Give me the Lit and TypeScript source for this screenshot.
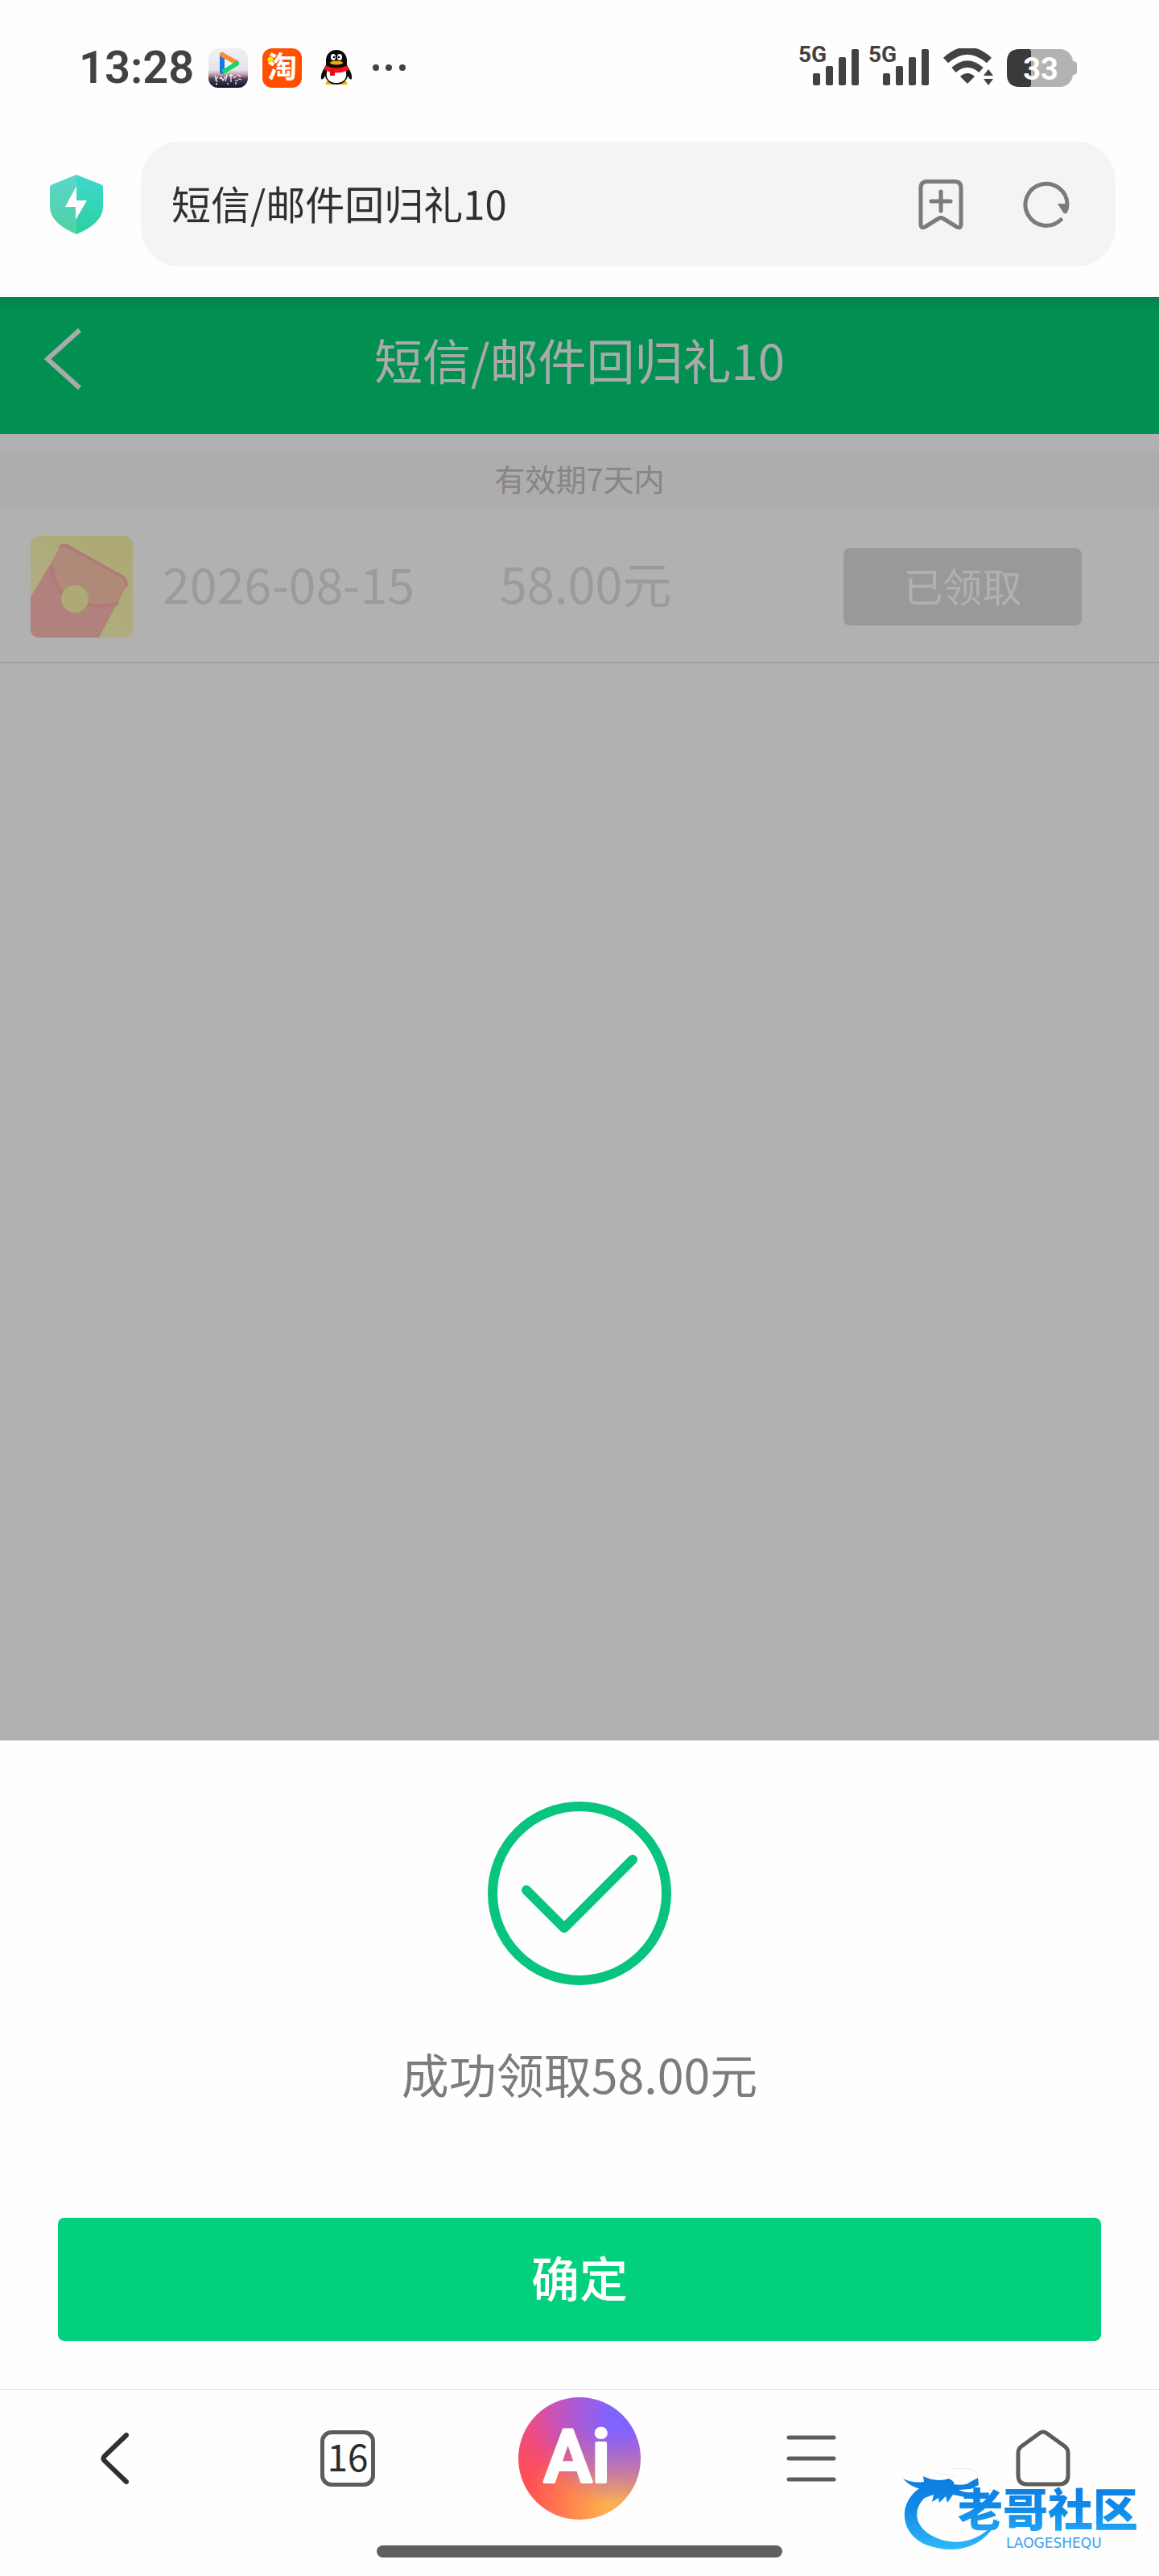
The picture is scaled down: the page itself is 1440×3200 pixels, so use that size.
import { LitElement, html, svg, css } from 'lit';
import { customElement, property } from 'lit/decorators.js';

@customElement('status-bar')
export class StatusBar extends LitElement {
  @property({ type: String })
  time = '';

  @property({ type: Number })
  battery = 0;

  static styles = css`
    :host {
      display: flex;
      align-items: center;
      justify-content: space-between;
      height: 168px;
      padding: 0 102px 0 98px;
      color: #424242;
      font-family: Roboto, 'Noto Sans CJK SC', sans-serif;
    }

    .left,
    .right {
      display: flex;
      align-items: center;
    }

    .left {
      gap: 18px;
    }

    .right {
      gap: 16px;
    }

    .time {
      font-size: 56px;
      font-weight: 600;
      line-height: 64px;
    }

    svg {
      display: block;
    }

    .signals {
      display: flex;
      gap: 10px;
    }
  `;

  private renderSignal() {
    return html`
      <svg width="77" height="68" viewBox="0 0 77 68" fill="#424242">
        <text x="1" y="27" font-size="28" font-weight="700">5G</text>
        <rect x="19" y="41" width="9" height="15" rx="2" />
        <rect x="35" y="32" width="9" height="24" rx="2" />
        <rect x="51" y="21" width="9" height="35" rx="2" />
        <rect x="67" y="11" width="9" height="45" rx="2" />
      </svg>
    `;
  }

  render() {
    return html`
      <div class="left">
        <span class="time">${this.time}</span>
        <svg width="49" height="49" viewBox="0 0 49 49">
          <defs>
            <linearGradient id="dusk" x1="0" y1="0" x2="0" y2="1">
              <stop offset="0" stop-color="#eef1f4" />
              <stop offset="0.55" stop-color="#e6e3ea" />
              <stop offset="0.66" stop-color="#c99fae" />
              <stop offset="0.78" stop-color="#4a3a55" />
              <stop offset="1" stop-color="#0d1626" />
            </linearGradient>
          </defs>
          <rect width="49" height="49" rx="12" fill="url(#dusk)" />
          <path d="M17 8v21" stroke="#1677e8" stroke-width="6" stroke-linecap="round" />
          <path d="M17 8l18 10" stroke="#ff8a2b" stroke-width="6" stroke-linecap="round" />
          <path d="M35 19L20 28" stroke="#12d66a" stroke-width="6" stroke-linecap="round" />
          <path d="M20 13v12l10-6z" fill="#f3f4f7" />
          <path
            d="M8 34l3 8M12 35l-4 5M14 38l2-2 2 4 3-5M23 33l-2 8M26 34h5M28 32v10M31 37l3-2M33 40h4M36 33l4 2M37 38l4 1M10 43v3M24 43v2M34 42v3"
            stroke="#fff"
            stroke-width="1.2"
            fill="none"
          />
        </svg>
        <svg width="49" height="49" viewBox="0 0 49 49">
          <rect width="49" height="49" rx="12" fill="#ff5000" />
          <text x="6" y="37" font-size="37" font-weight="700" fill="#fff">淘</text>
          <circle cx="10" cy="14" r="3.5" fill="#ffe600" />
        </svg>
        <svg width="49" height="49" viewBox="0 0 49 49">
          <path d="M12 45h26q1-4-4-5H16q-5 1-4 5z" fill="#f9a800" />
          <path
            d="M25 2c-8 0-13 6-13 13v6c-3 5-7 11-6 17 2 2 4-2 5-4 1 6 6 11 14 11s13-5 14-11c1 2 3 6 5 4 1-6-3-12-6-17v-6c0-7-5-13-13-13z"
            fill="#0a0a0a"
          />
          <path d="M14 26q11 6 22 0c4 11-2 17-11 17s-15-6-11-17z" fill="#fff" />
          <path d="M11 21q14 7 28 0l1 6q-15 7-30 0z" fill="#f4121a" />
          <path d="M17 27h6v7h-6z" fill="#e00d14" />
          <ellipse cx="21" cy="11" rx="3" ry="4" fill="#fff" />
          <ellipse cx="29" cy="11" rx="3" ry="4" fill="#fff" />
          <circle cx="22" cy="11" r="1.3" />
          <circle cx="28" cy="11" r="1.3" />
          <ellipse cx="25" cy="18" rx="8" ry="2.6" fill="#f9a800" />
        </svg>
        <svg width="50" height="10" viewBox="0 0 50 10" fill="#424242">
          <circle cx="7" cy="5" r="4" />
          <circle cx="23" cy="5" r="4" />
          <circle cx="40" cy="5" r="4" />
        </svg>
      </div>
      <div class="right">
        <div class="signals">${this.renderSignal()}${this.renderSignal()}</div>
        <svg width="64" height="48" viewBox="0 0 64 48" fill="none" stroke="#424242">
          <path d="M4 15Q31-9 58 15" stroke-width="9" />
          <path d="M14 27Q31 12 48 27" stroke-width="8" />
          <path d="M22 35Q31 27 40 35L31 44z" fill="#424242" stroke="none" />
          <path d="M57 26l6 8H51zM57 46l6-8H51z" fill="#424242" stroke="none" />
        </svg>
        <svg width="87" height="47" viewBox="0 0 87 47">
          <rect width="82" height="47" rx="16" fill="#b3b3b3" />
          <path d="M82 15q5 0 5 4v9q0 4-5 4z" fill="#b3b3b3" />
          <path d="M16 0h11q3 0 3 3v41q0 3-3 3H16Q0 47 0 31V16Q0 0 16 0z" fill="#3a3a3a" />
          <text x="42" y="38" text-anchor="middle" font-size="38" font-weight="700" fill="#fff">
            ${this.battery}
          </text>
        </svg>
      </div>
    `;
  }
}

@customElement('address-bar')
export class AddressBar extends LitElement {
  @property({ type: String })
  value = '';

  static styles = css`
    :host {
      display: flex;
      align-items: center;
      gap: 47px;
      padding: 8px 54px 38px 62px;
    }

    svg {
      display: block;
    }

    button {
      padding: 0;
      border: 0;
      background: none;
    }

    .field {
      flex: 1;
      display: flex;
      align-items: center;
      gap: 70px;
      height: 155px;
      padding: 0 56px 0 38px;
      border-radius: 48px;
      background: #f4f4f4;
      box-sizing: border-box;
    }

    input {
      flex: 1;
      min-width: 0;
      padding: 0 0 4px;
      border: 0;
      outline: 0;
      background: none;
      color: #2f2f2f;
      font-family: 'Noto Sans CJK SC', sans-serif;
      font-size: 49px;
      line-height: 72px;
    }
  `;

  render() {
    return html`
      <button aria-label="安全检测">
        <svg width="66" height="74" viewBox="0 0 66 74">
          <defs>
            <linearGradient id="left" x1="0" y1="0" x2="0" y2="1">
              <stop offset="0" stop-color="#5bd6cb" />
              <stop offset="1" stop-color="#4fd2a4" />
            </linearGradient>
            <linearGradient id="right" x1="0" y1="0" x2="0" y2="1">
              <stop offset="0" stop-color="#3fd8d0" />
              <stop offset="1" stop-color="#2bd0a0" />
            </linearGradient>
          </defs>
          <path d="M33 0L3 12q-3 1-3 4v24q0 20 33 34z" fill="url(#left)" />
          <path d="M33 0l30 12q3 1 3 4v24q0 20-33 34z" fill="url(#right)" />
          <path d="M33 14L19 40h13v16l14-24H33z" fill="#fff" />
        </svg>
      </button>
      <div class="field">
        <input type="text" aria-label="地址栏" .value=${this.value} />
        <button aria-label="添加书签">
          <svg width="62" height="64" viewBox="0 0 62 64" fill="none" stroke="#7b7b7b" stroke-width="5" stroke-linecap="round" stroke-linejoin="round">
            <path d="M14 3.500h34q8 0 8 8V57q0 5-5 3L34 49.500q-3-2-6 0L11 60q-5 2-5-3V11.500q0-8 8-8z" />
            <path d="M31 16v24M19 28h24" />
          </svg>
        </button>
        <button aria-label="刷新">
          <svg width="60" height="60" viewBox="0 0 60 60" fill="none" stroke="#7b7b7b" stroke-width="5" stroke-linecap="round">
            <path d="M48 49A26 26 0 1 1 56 30" />
            <path d="M44 29h14q1 7-3 12-3 1-4-1z" fill="#7b7b7b" stroke="none" />
          </svg>
        </button>
      </div>
    `;
  }
}

@customElement('coupon-page')
export class CouponPage extends LitElement {
  @property({ type: String })
  heading = '';

  @property({ type: Array })
  records: { date: string; amount: string; status: string }[] = [];

  static styles = css`
    :host {
      display: block;
      position: relative;
      background: #fefefe;
      font-family: 'Noto Sans CJK SC', sans-serif;
    }

    header {
      display: grid;
      grid-template-columns: 160px 1fr 160px;
      align-items: center;
      height: 170px;
      padding-bottom: 16px;
      box-sizing: border-box;
      background: linear-gradient(#04be70, #03cf76 24px);
    }

    h1 {
      margin: 0;
      color: #f4f4f4;
      font-size: 60px;
      font-weight: 400;
      line-height: 84px;
      text-align: center;
    }

    svg {
      display: block;
    }

    .back {
      justify-self: start;
      padding: 0 0 0 54px;
      border: 0;
      background: none;
    }

    .notice {
      margin: 21px 0 0;
      padding-bottom: 4px;
      background: #f9f6f6;
      color: #c0c0c0;
      font-size: 38px;
      line-height: 67px;
      text-align: center;
    }

    ul {
      margin: 0;
      padding: 0;
      list-style: none;
    }

    li {
      display: grid;
      grid-template-columns: 127px 382px 1fr 296px;
      align-items: center;
      column-gap: 37px;
      height: 193px;
      padding: 4px 96px 0 38px;
      border-bottom: 2px solid #e6e6e6;
      box-sizing: border-box;
      color: #dedede;
      font-size: 61px;
      line-height: 84px;
    }

    li span {
      padding-bottom: 10px;
    }

    .status {
      height: 96px;
      padding: 0 0 4px;
      border: 0;
      border-radius: 8px;
      background: #dcdcdc;
      color: #fdfdfd;
      font-family: inherit;
      font-size: 49px;
    }

    .mask {
      position: absolute;
      inset: 0;
      background: rgba(0, 0, 0, 0.3);
    }
  `;

  private renderEnvelope() {
    return svg`
      <svg width="127" height="126" viewBox="0 0 127 126">
        <defs>
          <clipPath id="tile"><rect width="127" height="126" rx="10" /></clipPath>
          <linearGradient id="paper" x1="0" y1="1" x2="1" y2="0">
            <stop offset="0" stop-color="#fdfac0" />
            <stop offset="1" stop-color="#f8f2a6" />
          </linearGradient>
        </defs>
        <g clip-path="url(#tile)">
          <rect width="127" height="126" fill="url(#paper)" />
          <path d="M36 15q4-6 11-2l66 37q8 5 5 13L84 128H0V76z" fill="#fdb9b4" />
          <path d="M36 15q4-6 11-2l66 37q8 5 5 13l-9 20q-16 6-38 2L43 74Q28 62 26 37z" fill="#fdc6ad" />
          <path d="M26 37q2 25 17 37M71 85q22 4 38-2" fill="none" stroke="#fbafad" stroke-width="5" />
          <path d="M36 15q4-6 11-2l66 37q8 5 5 13" fill="none" stroke="#fbb2af" stroke-width="4" />
          <circle cx="55" cy="78" r="17" fill="#fbf3a9" />
        </g>
      </svg>
    `;
  }

  render() {
    return html`
      <header>
        <button class="back" aria-label="返回">
          <svg width="48" height="78" viewBox="0 0 48 78">
            <path d="M45 3L5 39l40 36" fill="none" stroke="#f4f4f4" stroke-width="6" />
          </svg>
        </button>
        <h1>${this.heading}</h1>
      </header>
      <p class="notice">有效期7天内</p>
      <ul>
        ${this.records.map(
          (record) => html`
            <li>
              ${this.renderEnvelope()}
              <span>${record.date}</span>
              <span>${record.amount}</span>
              <button class="status">${record.status}</button>
            </li>
          `
        )}
      </ul>
      <div class="mask"></div>
    `;
  }
}

@customElement('result-sheet')
export class ResultSheet extends LitElement {
  @property({ type: String })
  message = '';

  static styles = css`
    :host {
      display: flex;
      flex-direction: column;
      align-items: center;
      padding: 76px 72px 60px;
      font-family: 'Noto Sans CJK SC', sans-serif;
    }

    p {
      margin: 68px 0 137px;
      color: #7c7c7c;
      font-size: 59px;
      line-height: 84px;
    }

    .confirm {
      width: 100%;
      height: 153px;
      padding: 0 0 8px;
      border: 0;
      border-radius: 8px;
      background: #02d07c;
      color: #fff;
      font-family: inherit;
      font-size: 60px;
      font-weight: 500;
    }
  `;

  render() {
    return html`
      <svg width="228" height="228" viewBox="0 0 228 228" fill="none" stroke="#08c47f" stroke-width="12">
        <circle cx="114" cy="114" r="108" />
        <path d="M48 110l47 47 85-85" stroke-linecap="round" stroke-linejoin="round" />
      </svg>
      <p>${this.message}</p>
      <button class="confirm">确定</button>
    `;
  }
}

@customElement('browser-nav')
export class BrowserNav extends LitElement {
  @property({ type: Number })
  tabs = 0;

  static styles = css`
    :host {
      display: block;
      position: relative;
      padding: 9px 0 23px;
      border-top: 1px solid #e0e0e0;
    }

    nav {
      display: grid;
      grid-template-columns: repeat(5, 1fr);
      align-items: center;
      justify-items: center;
    }

    button {
      padding: 0;
      border: 0;
      background: none;
    }

    svg {
      display: block;
    }

    .tabs {
      width: 68px;
      height: 70px;
      padding-bottom: 8px;
      border: 5px solid #5c5c5c;
      border-radius: 14px;
      color: #2c2c2c;
      font-family: 'Noto Sans CJK SC', sans-serif;
      font-size: 46px;
      line-height: 52px;
    }

    .ai {
      width: 152px;
      height: 152px;
      border-radius: 50%;
      background:
        radial-gradient(circle at 84% 16%, #8163ff 8%, rgba(129, 99, 255, 0) 62%),
        radial-gradient(circle at 82% 92%, #ffb04c 8%, rgba(255, 176, 76, 0) 62%),
        linear-gradient(200deg, #d650b8, #f04a84 45%, #ff4f52 75%);
    }

    .handle {
      width: 504px;
      height: 15px;
      margin: 32px auto 0;
      border-radius: 8px;
      background: #5f5f5f;
    }

    .watermark {
      position: absolute;
      right: 20px;
      bottom: 28px;
    }
  `;

  private renderWatermark() {
    return svg`
      <svg class="watermark" width="300" height="108" viewBox="0 0 300 108">
        <defs>
          <linearGradient id="sea" gradientUnits="userSpaceOnUse" x1="0" y1="10" x2="0" y2="104">
            <stop offset="0" stop-color="#0d7ce0" />
            <stop offset="0.45" stop-color="#108ae8" />
            <stop offset="1" stop-color="#2fb9fb" />
          </linearGradient>
        </defs>
        <g fill="url(#sea)">
          <path d="M38 20C-4 32-8 80 30 97c36 14 76 4 90-34-16 28-50 38-78 25C10 74 12 42 46 28z" />
          <path d="M2 15q12 6 26 4l-1-7q16 8 32 3 8 4 6 7 14 2 19-2l11-6 1 9-10 5-15 1q10 4 16 3l9 3-5 6-17-4-10-2-7 10-2-8-8 8-1-6-8 5 2-9-14 5q4-8 12-12-22 3-36-13z" />
        </g>
        <path d="M40 6q14 6 28 5M64 3q26-4 34 9" fill="none" stroke="#e3eff9" stroke-width="1" />
        <text x="70" y="74" font-family="'Noto Sans CJK SC', sans-serif" font-size="56" font-weight="900" fill="url(#sea)">老哥社区</text>
        <text x="130" y="101" font-family="'DejaVu Sans', sans-serif" font-size="17" fill="#3aa0ec">LAOGESHEQU</text>
      </svg>
    `;
  }

  render() {
    return html`
      <nav>
        <button aria-label="后退">
          <svg width="38" height="68" viewBox="0 0 38 68" fill="none" stroke="#303030" stroke-width="6" stroke-linecap="round">
            <path d="M32 5L5 31q-3 3 0 6l27 26" />
          </svg>
        </button>
        <button class="tabs" aria-label="标签页">${this.tabs}</button>
        <button class="ai" aria-label="Ai">
          <svg width="152" height="152" viewBox="0 0 152 152">
            <text x="73" y="105" text-anchor="middle" font-family="Roboto, sans-serif" font-size="90" font-weight="500" fill="#fff" stroke="#fff" stroke-width="4" stroke-linejoin="round">Ai</text>
          </svg>
        </button>
        <button aria-label="菜单">
          <svg width="62" height="60" viewBox="0 0 62 60" stroke="#5c5c5c" stroke-width="5" stroke-linecap="round">
            <path d="M3 4h56M3 30h56M3 56h56" />
          </svg>
        </button>
        <button aria-label="主页">
          <svg width="68" height="72" viewBox="0 0 68 72" fill="none" stroke="#5c5c5c" stroke-width="5" stroke-linejoin="round">
            <path d="M29 5q5-4 10 0l22 16q4 3 4 8v28q0 11-11 11H14Q3 68 3 57V29q0-5 4-8z" />
          </svg>
        </button>
      </nav>
      <div class="handle"></div>
      ${this.renderWatermark()}
    `;
  }
}

@customElement('app-root')
export class AppRoot extends LitElement {
  @property({ type: String })
  heading = '短信/邮件回归礼10';

  @property({ type: Array })
  records = [{ date: '2026-08-15', amount: '58.00元', status: '已领取' }];

  static styles = css`
    :host {
      display: flex;
      flex-direction: column;
      min-height: 100vh;
      background: #fefefe;
    }

    coupon-page {
      flex: 1;
    }
  `;

  render() {
    return html`
      <status-bar time="13:28" .battery=${33}></status-bar>
      <address-bar .value=${this.heading}></address-bar>
      <coupon-page .heading=${this.heading} .records=${this.records}></coupon-page>
      <result-sheet message="成功领取58.00元"></result-sheet>
      <browser-nav .tabs=${16}></browser-nav>
    `;
  }
}

declare global {
  interface HTMLElementTagNameMap {
    'app-root': AppRoot;
    'status-bar': StatusBar;
    'address-bar': AddressBar;
    'coupon-page': CouponPage;
    'result-sheet': ResultSheet;
    'browser-nav': BrowserNav;
  }
}
